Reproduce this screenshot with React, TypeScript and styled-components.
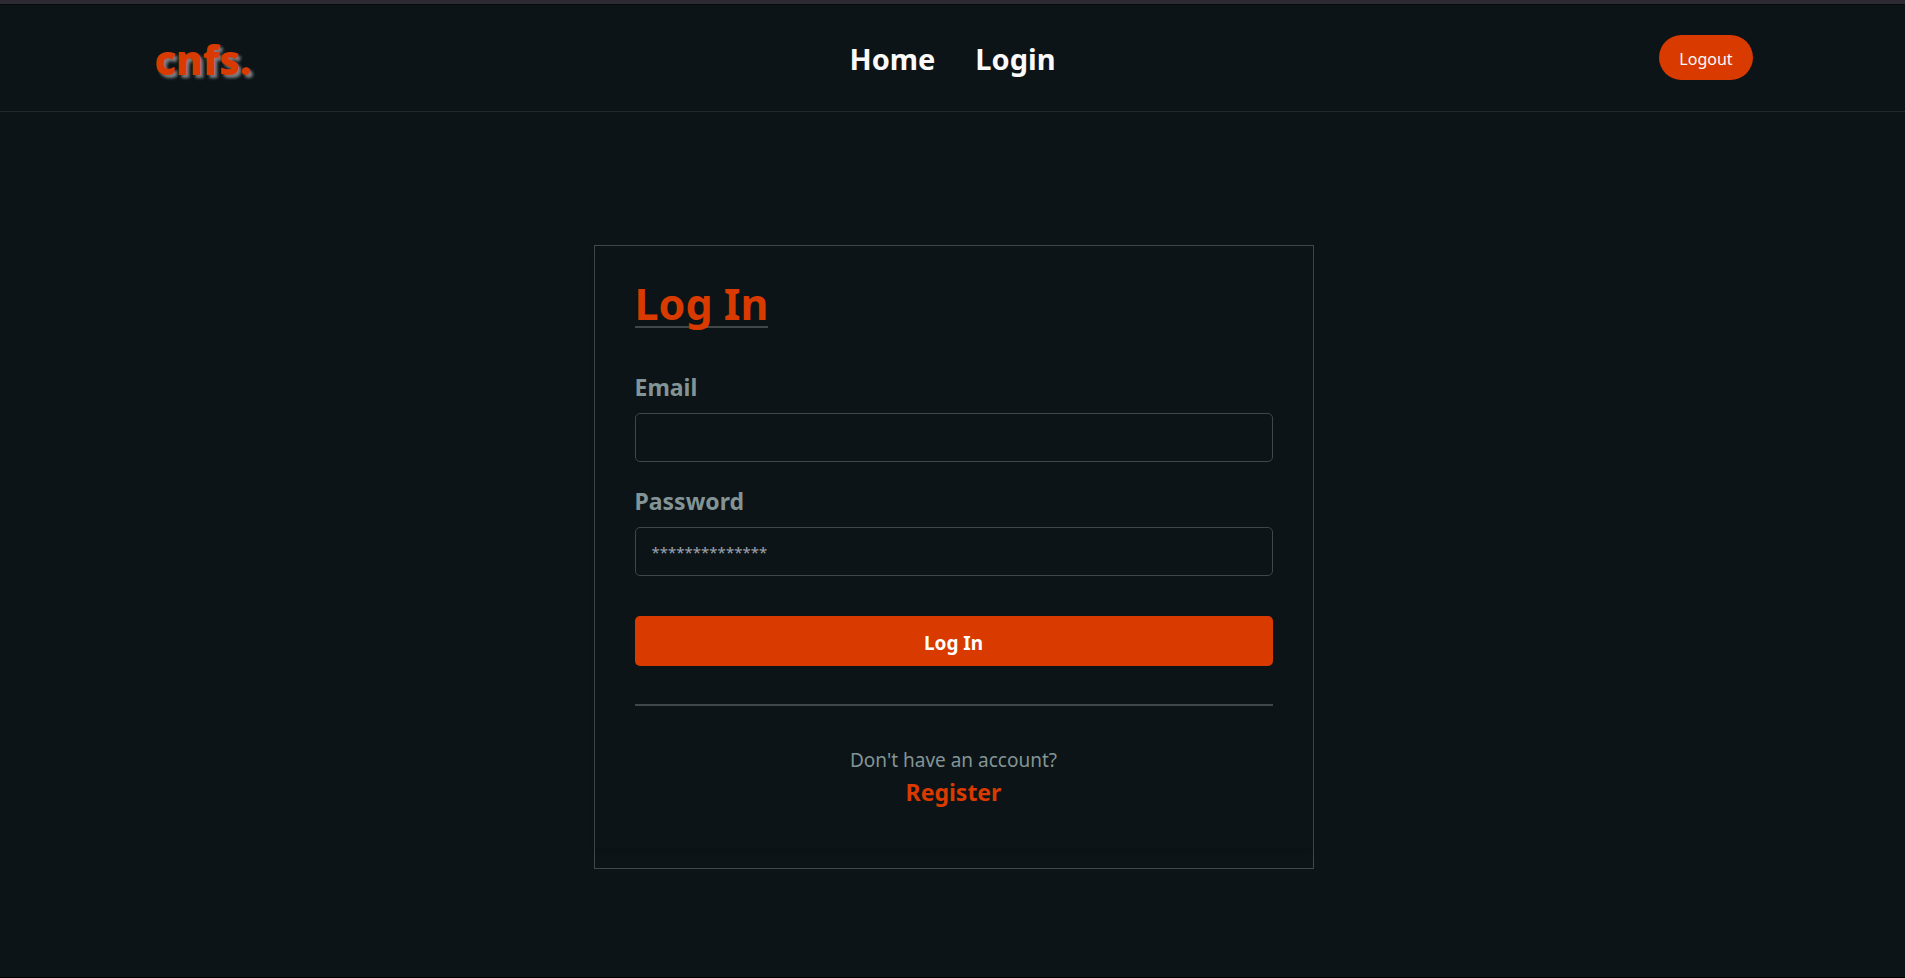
import React from "react";
import styled, { createGlobalStyle } from "styled-components";

const color = {
  page: "#0c1417",
  accent: "#d83a00",
  line: "#414749",
  muted: "#839496",
  white: "#fafafa",
};

const GlobalStyle = createGlobalStyle`
  *, *::before, *::after { box-sizing: border-box; }
  body {
    margin: 0;
    background: ${color.page};
    font-family: "Segoe UI", "Noto Sans", "Open Sans", sans-serif;
  }
  button, input { font-family: inherit; }
`;

const Page = styled.div`
  min-height: 100vh;
  display: flex;
  flex-direction: column;
  border-top: 4px solid #2e2a33;
  border-bottom: 1px solid #000;
`;

const Header = styled.header`
  display: grid;
  grid-template-columns: 1fr auto 1fr;
  align-items: start;
  padding: 30px 8% 26px;
  border-top: 1px solid #07090a;
  border-bottom: 1px solid #21292b;
`;

const Logo = styled.a`
  justify-self: start;
  padding-left: 2px;
  color: ${color.accent};
  font-family: "Segoe UI", "Open Sans", sans-serif;
  font-size: 40px;
  font-weight: 800;
  line-height: 50px;
  text-decoration: none;
  text-shadow: 3px 3px 3px #7a7d7e;
`;

const Nav = styled.nav`
  display: flex;
  gap: 40px;
`;

const NavLink = styled.a`
  color: ${color.white};
  font-size: 29px;
  font-weight: 700;
  line-height: 48px;
  text-decoration: none;
`;

const LogoutButton = styled.button`
  justify-self: end;
  height: 45px;
  padding: 2px 20px 0;
  border: 0;
  border-radius: 24px;
  background: ${color.accent};
  color: ${color.white};
  font-size: 16px;
  cursor: pointer;
`;

const Main = styled.main`
  display: flex;
  justify-content: center;
  padding: 133px 24px 0 26px;
`;

const Card = styled.section`
  width: 100%;
  max-width: 720px;
  padding-bottom: 20px;
  border: 1px solid ${color.line};
`;

const Form = styled.form`
  display: flex;
  flex-direction: column;
  padding: 36px 40px 40px;
  box-shadow: 0 4px 6px -1px rgba(0, 0, 0, 0.1);
`;

const Title = styled.h1`
  align-self: flex-start;
  margin: 0 0 40px;
  border-bottom: 2px solid ${color.line};
  color: ${color.accent};
  font-size: 43px;
  font-weight: 700;
  line-height: 44px;
`;

const Field = styled.div`
  display: flex;
  flex-direction: column;
  margin-bottom: 20px;
`;

const Label = styled.label`
  margin-bottom: 7px;
  color: ${color.muted};
  font-size: 23px;
  font-weight: 700;
  line-height: 38px;
`;

const Input = styled.input`
  height: 49px;
  padding: 0 16px;
  border: 1px solid ${color.line};
  border-radius: 5px;
  background: transparent;
  color: ${color.white};
  font-size: 15px;

  &::placeholder {
    color: #9ca3af;
    opacity: 1;
  }
`;

const SubmitButton = styled.button`
  height: 50px;
  margin-top: 20px;
  padding: 4px 0 0;
  border: 0;
  border-radius: 5px;
  background: ${color.accent};
  color: #fff;
  font-size: 19px;
  font-weight: 700;
  cursor: pointer;
`;

const Divider = styled.hr`
  width: 100%;
  height: 2px;
  margin: 38px 0;
  border: 0;
  background: ${color.line};
`;

const Signup = styled.div`
  display: flex;
  flex-direction: column;
  align-items: center;
  color: ${color.muted};
  font-size: 19px;
  line-height: 32px;
`;

const RegisterLink = styled.a`
  color: ${color.accent};
  font-size: 23px;
  font-weight: 700;
  text-decoration: none;
`;

export default function App() {
  return (
    <>
      <GlobalStyle />
      <Page>
        <Header>
          <Logo href="#">cnfs.</Logo>
          <Nav>
            <NavLink href="#">Home</NavLink>
            <NavLink href="#">Login</NavLink>
          </Nav>
          <LogoutButton type="button">Logout</LogoutButton>
        </Header>
        <Main>
          <Card>
            <Form onSubmit={(event: React.FormEvent) => event.preventDefault()}>
              <Title>Log In</Title>
              <Field>
                <Label htmlFor="email">Email</Label>
                <Input id="email" type="email" />
              </Field>
              <Field>
                <Label htmlFor="password">Password</Label>
                <Input id="password" type="password" placeholder="**************" />
              </Field>
              <SubmitButton type="submit">Log In</SubmitButton>
              <Divider />
              <Signup>
                <span>Don't have an account?</span>
                <RegisterLink href="#">Register</RegisterLink>
              </Signup>
            </Form>
          </Card>
        </Main>
      </Page>
    </>
  );
}
